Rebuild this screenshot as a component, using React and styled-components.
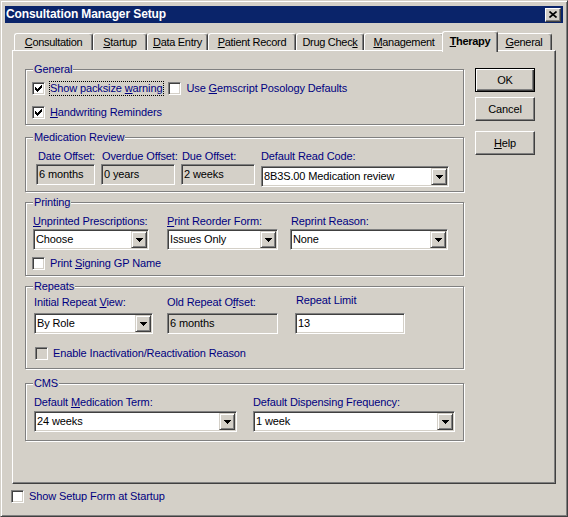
import React from "react";
import styled, { createGlobalStyle } from "styled-components";

const NAVY = "#000080";
const FACE = "#d4d0c8";

const GlobalStyle = createGlobalStyle`
  html, body { margin: 0; padding: 0; background: ${FACE}; }
  body { font-family: "Liberation Sans", Arial, sans-serif; font-size: 11px; letter-spacing: -0.12px; color: #000; }
  *, *::before, *::after { box-sizing: border-box; }
  u { text-decoration-thickness: 1px; text-underline-offset: 1px; }
`;

const Window = styled.div`
  width: 568px;
  height: 517px;
  background: ${FACE};
  border: 1px solid;
  border-color: ${FACE} #404040 #404040 ${FACE};
  box-shadow: inset 1px 1px 0 #fff, inset -1px -1px 0 #808080;
  padding: 5px 4px 0;
  display: flex;
  flex-direction: column;
`;

const TitleBar = styled.div`
  height: 17px;
  background: #0a246a;
  display: flex;
  align-items: center;
  justify-content: space-between;
  padding: 0 2px 0 1px;
`;

const TitleText = styled.span`
  color: #fff;
  font-weight: 700;
  font-size: 12px;
  letter-spacing: -0.1px;
  line-height: 17px;
`;

const CloseBtn = styled.span`
  width: 16px;
  height: 14px;
  background: ${FACE};
  border: 1px solid;
  border-color: #fff #404040 #404040 #fff;
  box-shadow: inset -1px -1px 0 #808080;
  display: flex;
  align-items: center;
  justify-content: center;
`;

const TabArea = styled.div`
  margin: 8px 7px 0;
  display: flex;
  flex-direction: column;
`;

const TabStrip = styled.div`
  height: 19px;
  display: flex;
  align-items: flex-end;
  padding-left: 2px;
`;

const Tab = styled.div`
  position: relative;
  z-index: ${(p) => (p.$active ? 2 : 1)};
  width: ${(p) => (p.$active ? p.$w + 4 : p.$w)}px;
  height: ${(p) => (p.$active ? 21 : 17)}px;
  margin: 0 ${(p) => (p.$active ? -2 : 0)}px ${(p) => (p.$active ? -2 : 0)}px;
  padding-bottom: ${(p) => (p.$active ? 2 : 1)}px;
  background: ${FACE};
  border: 1px solid #fff;
  border-bottom: 0;
  border-right-color: #404040;
  border-radius: 3px 3px 0 0;
  box-shadow: inset -1px 0 0 #808080;
  display: flex;
  align-items: center;
  justify-content: center;
  font-weight: ${(p) => (p.$active ? 700 : 400)};
  letter-spacing: -0.3px;
  white-space: nowrap;
`;

const Panel = styled.div`
  height: 434px;
  background: ${FACE};
  border: 1px solid;
  border-color: #fff #404040 #404040 #fff;
  box-shadow: inset -1px -1px 0 #808080;
  display: flex;
  gap: 11px;
  padding: 0 20px 0 12px;
`;

const GroupsColumn = styled.div`
  width: 439px;
  padding-top: 18px;
  display: flex;
  flex-direction: column;
`;

const ButtonColumn = styled.div`
  width: 60px;
  padding-top: 17px;
  display: flex;
  flex-direction: column;
`;

const Group = styled.div`
  position: relative;
  height: ${(p) => p.$h}px;
  margin-top: ${(p) => p.$mt || 0}px;
  border: 1px solid #808080;
  box-shadow: 1px 1px 0 #fff, inset 1px 1px 0 #fff;
  padding: ${(p) => p.$pad};
  display: flex;
  flex-direction: column;
  align-items: flex-start;
`;

const Legend = styled.span`
  position: absolute;
  top: -7px;
  left: 7px;
  padding: 0 1px;
  background: ${FACE};
  color: ${NAVY};
  line-height: 13px;
`;

const FieldRow = styled.div`
  display: flex;
  align-items: flex-start;
`;

const Field = styled.div`
  display: flex;
  flex-direction: column;
  width: ${(p) => p.$w}px;
  margin-left: ${(p) => p.$ml || 0}px;
`;

const FieldLabel = styled.span`
  line-height: 13px;
  color: ${NAVY};
  white-space: nowrap;
  margin-top: ${(p) => p.$mt || 0}px;
  margin-bottom: ${(p) => p.$mb}px;
  padding-left: ${(p) => p.$pl || 0}px;
`;

const Sunken = styled.div`
  height: ${(p) => p.$h || 21}px;
  margin-top: ${(p) => p.$mt || 0}px;
  background: ${(p) => p.$bg || "#fff"};
  border: 1px solid;
  border-color: #808080 #fff #fff #808080;
  box-shadow: inset 1px 1px 0 #404040, inset -1px -1px 0 ${FACE};
  display: flex;
  align-items: center;
  padding: 1px;
  white-space: nowrap;
`;

const BoxText = styled.span`
  flex: 1;
  padding-left: ${(p) => p.$pl || 1}px;
  line-height: 17px;
  overflow: hidden;
`;

const DropButton = styled.span`
  width: 16px;
  height: 17px;
  flex: none;
  background: ${FACE};
  border: 1px solid;
  border-color: ${FACE} #404040 #404040 ${FACE};
  box-shadow: inset 1px 1px 0 #fff, inset -1px -1px 0 #808080;
  display: flex;
  align-items: center;
  justify-content: center;
`;

const CheckRow = styled.div`
  height: 17px;
  display: flex;
  align-items: center;
  margin-top: ${(p) => p.$mt || 0}px;
  margin-left: ${(p) => p.$ml || 0}px;
`;

const CheckBox = styled.span`
  width: 13px;
  height: 13px;
  flex: none;
  margin-left: ${(p) => p.$ml || 0}px;
  background: ${(p) => (p.$disabled ? FACE : "#fff")};
  border: 1px solid;
  border-color: #808080 #fff #fff #808080;
  box-shadow: inset 1px 1px 0 #404040, inset -1px -1px 0 ${FACE};
  display: flex;
  align-items: center;
  justify-content: center;
`;

const CheckLabel = styled.span`
  margin-left: 4px;
  padding: 0 1px 0 0;
  line-height: 13px;
  color: ${NAVY};
  white-space: nowrap;
  border: 1px ${(p) => (p.$focus ? "dotted #000" : "solid transparent")};
`;

const Button = styled.button`
  width: 60px;
  height: 24px;
  margin-top: ${(p) => p.$mt || 0}px;
  padding: 0;
  font-family: "Liberation Sans", Arial, sans-serif;
  font-size: 11px;
  letter-spacing: -0.12px;
  color: #000;
  background: ${FACE};
  border: 1px solid;
  border-color: ${(p) => (p.$default ? "#000" : "#fff #404040 #404040 #fff")};
  box-shadow: ${(p) =>
    p.$default
      ? "inset 1px 1px 0 #fff, inset -1px -1px 0 #404040, inset -2px -2px 0 #808080"
      : "inset -1px -1px 0 #808080"};
`;

const FooterRow = styled(CheckRow)`
  margin: 4px 0 0 6px;
`;

const CheckMark = () => (
  <svg width="7" height="7" viewBox="0 0 7 7" shapeRendering="crispEdges">
    {[2, 3, 4, 3, 2, 1, 0].map((y, x) => (
      <rect key={x} x={x} y={y} width="1" height="3" fill="#000" />
    ))}
  </svg>
);

const Arrow = () => (
  <svg width="7" height="4" viewBox="0 0 7 4" shapeRendering="crispEdges">
    <rect x="0" y="0" width="7" height="1" fill="#000" />
    <rect x="1" y="1" width="5" height="1" fill="#000" />
    <rect x="2" y="2" width="3" height="1" fill="#000" />
    <rect x="3" y="3" width="1" height="1" fill="#000" />
  </svg>
);

const CloseGlyph = () => (
  <svg width="8" height="7" viewBox="0 0 8 7">
    <path d="M0.5 0.5 L7.5 6.5 M7.5 0.5 L0.5 6.5" stroke="#000" strokeWidth="1.6" />
  </svg>
);

const Check = ({ checked, disabled, ml }) => (
  <CheckBox $disabled={disabled} $ml={ml}>
    {checked && <CheckMark />}
  </CheckBox>
);

const Combo = ({ w, mt, children }) => (
  <Sunken style={{ width: w }} $mt={mt}>
    <BoxText $pl={1}>{children}</BoxText>
    <DropButton>
      <Arrow />
    </DropButton>
  </Sunken>
);

const Edit = ({ w, bg, children }) => (
  <Sunken style={{ width: w }} $bg={bg}>
    <BoxText $pl={1}>{children}</BoxText>
  </Sunken>
);

const tabs = [
  { w: 79, label: <><u>C</u>onsultation</> },
  { w: 54, label: <><u>S</u>tartup</> },
  { w: 61, label: <><u>D</u>ata Entry</> },
  { w: 88, label: <><u>P</u>atient Record</> },
  { w: 68, label: <>Drug Chec<u>k</u></> },
  { w: 80, label: <><u>M</u>anagement</> },
  { w: 52, label: <><u>T</u>herapy</>, active: true },
  { w: 56, label: <><u>G</u>eneral</> },
];

export default function App() {
  return (
    <>
      <GlobalStyle />
      <Window>
        <TitleBar>
          <TitleText>Consultation Manager Setup</TitleText>
          <CloseBtn>
            <CloseGlyph />
          </CloseBtn>
        </TitleBar>

        <TabArea>
          <TabStrip>
            {tabs.map((t, i) => (
              <Tab key={i} $w={t.w} $active={t.active}>
                {t.label}
              </Tab>
            ))}
          </TabStrip>

          <Panel>
            <GroupsColumn>
              <Group $h={56} $pad="10px 0 0 6px">
                <Legend>General</Legend>
                <CheckRow>
                  <Check checked />
                  <CheckLabel $focus>
                    Show packsize <u>w</u>arning
                  </CheckLabel>
                  <Check ml={4} />
                  <CheckLabel>
                    Use <u>G</u>emscript Posology Defaults
                  </CheckLabel>
                </CheckRow>
                <CheckRow $mt={7}>
                  <Check checked />
                  <CheckLabel>
                    <u>H</u>andwriting Reminders
                  </CheckLabel>
                </CheckRow>
              </Group>

              <Group $h={55} $mt={12} $pad="12px 0 0 10px">
                <Legend>Medication Review</Legend>
                <FieldRow>
                  <Field $w={59}>
                    <FieldLabel $mb={1} $pl={2}>Date Offset:</FieldLabel>
                    <Edit w={59} bg={FACE}>6 months</Edit>
                  </Field>
                  <Field $w={74} $ml={6}>
                    <FieldLabel $mb={1} $pl={1}>Overdue Offset:</FieldLabel>
                    <Edit w={74} bg={FACE}>0 years</Edit>
                  </Field>
                  <Field $w={74} $ml={6}>
                    <FieldLabel $mb={1} $pl={1}>Due Offset:</FieldLabel>
                    <Edit w={74} bg={FACE}>2 weeks</Edit>
                  </Field>
                  <Field $w={188} $ml={6}>
                    <FieldLabel $mb={1}>Default Read Code:</FieldLabel>
                    <Combo w={188} mt={2}>8B3S.00 Medication review</Combo>
                  </Field>
                </FieldRow>
              </Group>

              <Group $h={74} $mt={10} $pad="12px 0 0 7px">
                <Legend>Printing</Legend>
                <FieldRow>
                  <Field $w={116}>
                    <FieldLabel $mb={1}>
                      <u>U</u>nprinted Prescriptions:
                    </FieldLabel>
                    <Combo w={116}>Choose</Combo>
                  </Field>
                  <Field $w={111} $ml={18}>
                    <FieldLabel $mb={1}>
                      <u>P</u>rint Reorder Form:
                    </FieldLabel>
                    <Combo w={111}>Issues Only</Combo>
                  </Field>
                  <Field $w={158} $ml={12}>
                    <FieldLabel $mb={1} $pl={1}>Reprint Reason:</FieldLabel>
                    <Combo w={158}>None</Combo>
                  </Field>
                </FieldRow>
                <CheckRow $mt={5} $ml={-1}>
                  <Check />
                  <CheckLabel>
                    Print <u>S</u>igning GP Name
                  </CheckLabel>
                </CheckRow>
              </Group>

              <Group $h={83} $mt={10} $pad="9px 0 0 8px">
                <Legend>Repeats</Legend>
                <FieldRow>
                  <Field $w={119}>
                    <FieldLabel $mb={4}>
                      Initial Repeat <u>V</u>iew:
                    </FieldLabel>
                    <Combo w={119}>By Role</Combo>
                  </Field>
                  <Field $w={111} $ml={14}>
                    <FieldLabel $mb={4}>
                      Old Repeat O<u>f</u>fset:
                    </FieldLabel>
                    <Edit w={111} bg={FACE}>6 months</Edit>
                  </Field>
                  <Field $w={110} $ml={17}>
                    <FieldLabel $mt={-2} $mb={6} $pl={1}>Repeat Limit</FieldLabel>
                    <Edit w={110}>13</Edit>
                  </Field>
                </FieldRow>
                <CheckRow $mt={11} $ml={1}>
                  <Check disabled />
                  <CheckLabel>Enable Inactivation/Reactivation Reason</CheckLabel>
                </CheckRow>
              </Group>

              <Group $h={58} $mt={14} $pad="12px 0 0 8px">
                <Legend>CMS</Legend>
                <FieldRow>
                  <Field $w={203}>
                    <FieldLabel $mb={2}>
                      Default <u>M</u>edication Term:
                    </FieldLabel>
                    <Combo w={203}>24 weeks</Combo>
                  </Field>
                  <Field $w={202} $ml={16}>
                    <FieldLabel $mb={2}>Default Dispensing Frequency:</FieldLabel>
                    <Combo w={202}>1 week</Combo>
                  </Field>
                </FieldRow>
              </Group>
            </GroupsColumn>

            <ButtonColumn>
              <Button $default>OK</Button>
              <Button $mt={5}>Cancel</Button>
              <Button $mt={10}>
                <u>H</u>elp
              </Button>
            </ButtonColumn>
          </Panel>
        </TabArea>

        <FooterRow>
          <Check />
          <CheckLabel>Show Setup Form at Startup</CheckLabel>
        </FooterRow>
      </Window>
    </>
  );
}
